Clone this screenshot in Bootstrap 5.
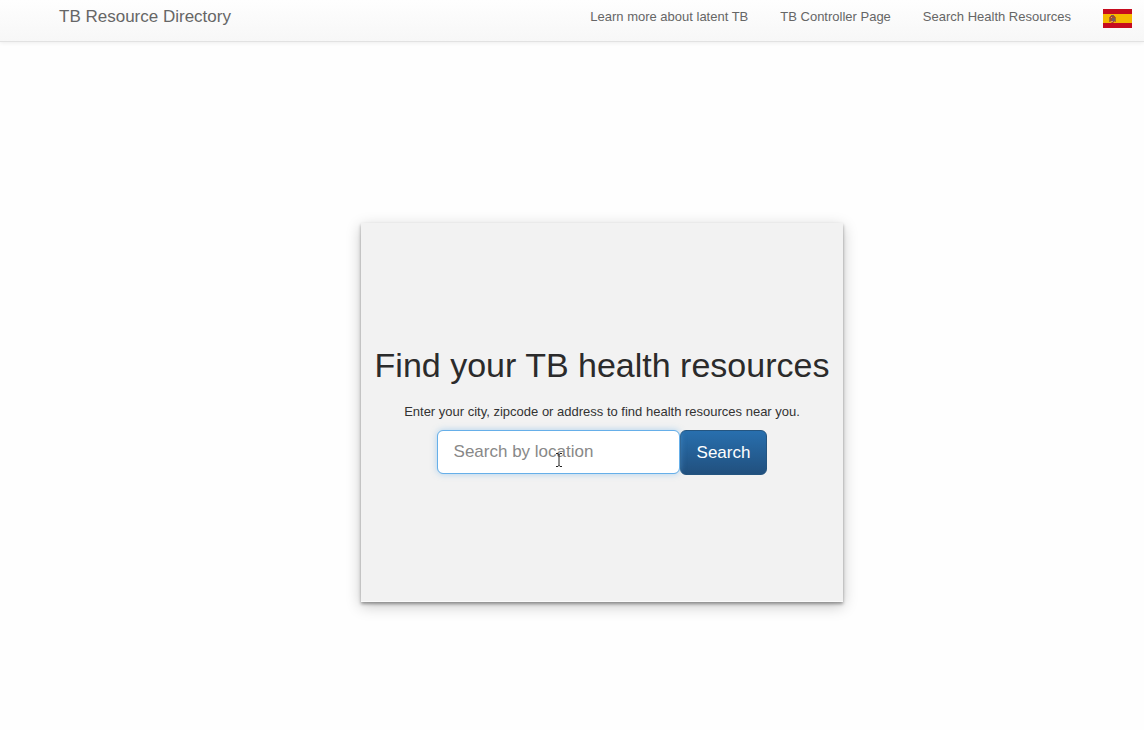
<!DOCTYPE html>
<html lang="en">
<head>
<meta charset="utf-8">
<meta name="viewport" content="width=device-width, initial-scale=1">
<title>TB Resource Directory</title>
<link href="https://cdn.jsdelivr.net/npm/bootstrap@5.3.0/dist/css/bootstrap.min.css" rel="stylesheet">
<style>
body { font-family: "Liberation Sans", Arial, sans-serif; font-size: 13px; line-height: 20px; color: #333; background: #fefefe; }
.site-nav { height: 42px; padding: 0 12px 8px 59px; background: linear-gradient(#fefefe, #f7f7f7); border-bottom: 1px solid #e2e2e2; box-shadow: 0 1px 4px rgba(0,0,0,.07); }
.site-nav .navbar-brand { font-size: 17px; line-height: 24px; color: #666; padding: 0; margin: 0; }
.site-links { gap: 32px; }
.site-links .nav-link { color: #666; }
.site-main { padding: 181px 0 40px 60px; }
.finder { width: 482px; min-height: 379px; background: #f2f2f2; border-bottom: 1px solid #fafafa; box-shadow: 0 2px 3px rgba(0,0,0,.36), 0 4px 14px rgba(0,0,0,.22); padding-bottom: 4px; }
.finder h1 { font-size: 34px; line-height: 40px; color: #2b2b2b; margin-bottom: 17px; }
.finder label { margin-bottom: 8px; }
.finder-field { width: 243px; }
.finder .form-control { height: 44px; padding: 8px 16px; font-size: 17px; line-height: 24px; border: 1px solid #66afe9; border-radius: 6px; box-shadow: 0 0 6px rgba(102,175,233,.5); }
.finder .form-control::placeholder { color: #888; }
.finder .btn { height: 45px; padding: 8px 16px; font-size: 17px; line-height: 24px; color: #fff; border: 1px solid #245580; border-radius: 6px; background: linear-gradient(#286fae, #21507e); }
.text-cursor { left: 118px; top: 23px; pointer-events: none; }
</style>
</head>
<body>
<nav class="navbar navbar-expand site-nav justify-content-between">
  <a class="navbar-brand" href="#">TB Resource Directory</a>
  <div class="navbar-nav site-links align-items-center">
    <a class="nav-link p-0" href="#">Learn more about latent TB</a>
    <a class="nav-link p-0" href="#">TB Controller Page</a>
    <a class="nav-link p-0" href="#">Search Health Resources</a>
    <a class="nav-link p-0 pt-1 d-flex" href="#" aria-label="Español">
      <svg width="29" height="19" viewBox="0 0 29 19" aria-hidden="true">
        <path fill="#c60b1e" d="M0 0h29v19H0z"/>
        <path fill="#f5b800" d="M0 5h29v9H0z"/>
        <path fill="#ad6a20" d="M6 8h1v5H6zM12 8h1v5h-1z"/>
        <path fill="#a54b2b" d="M7 7h5v5l-2 2H9l-2-2z"/>
        <path fill="#765b62" d="M8 6h3v1H8zM9 9h3v3H9z"/>
        <path fill="#dc9a68" d="M8 8h1v1H8zM8 12h2v1H8z"/>
      </svg>
    </a>
  </div>
</nav>
<main class="site-main d-flex justify-content-center">
  <form class="finder d-flex flex-column align-items-center justify-content-center">
    <h1 class="fw-normal text-nowrap">Find your TB health resources</h1>
    <label for="place">Enter your city, zipcode or address to find health resources near you.</label>
    <div class="d-flex">
      <div class="finder-field position-relative">
        <input class="form-control" id="place" type="text" placeholder="Search by location">
        <svg class="text-cursor position-absolute" width="8" height="14" viewBox="0 0 8 14" fill="none" stroke="#222" aria-hidden="true"><path d="M1 .5h2l1 1 1-1h2M4 1v12M1 13.5h2l1-1 1 1h2"/></svg>
      </div>
      <button class="btn" type="button">Search</button>
    </div>
  </form>
</main>
<script src="https://cdn.jsdelivr.net/npm/bootstrap@5.3.0/dist/js/bootstrap.bundle.min.js"></script>
</body>
</html>
